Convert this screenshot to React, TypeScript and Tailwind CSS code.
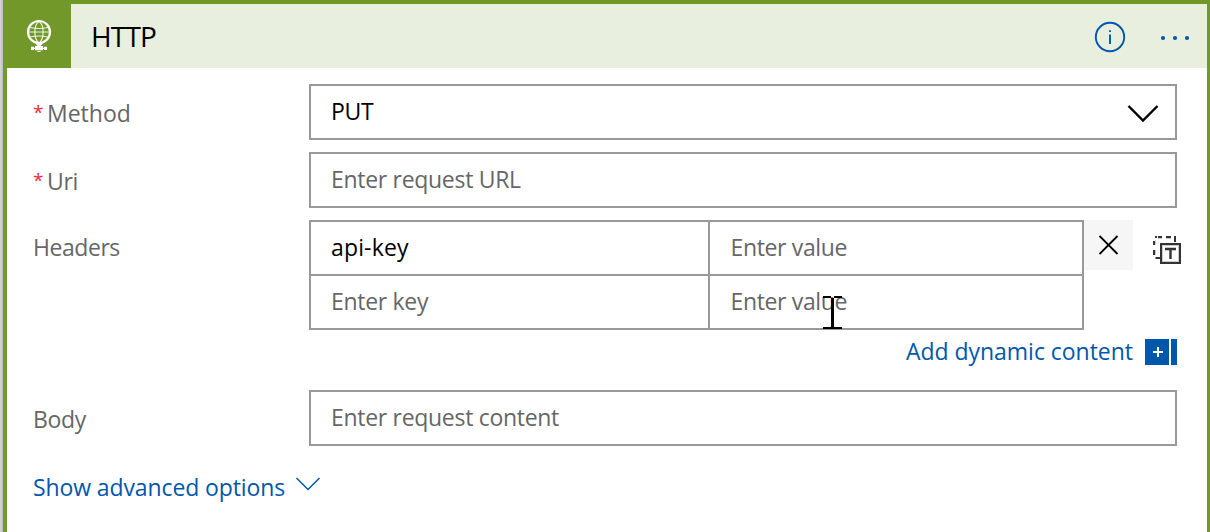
import React from "react";

const field =
  "flex h-14 items-center border-2 border-[#999] bg-white pl-5 pb-0.5";

function Label({ required, children, className = "" }: { required?: boolean; children: string; className?: string }) {
  return (
    <div className={`flex w-[276px] shrink-0 items-center whitespace-nowrap text-[#666] ${className}`}>
      {required && <span className="w-3.5 pb-0.5 text-[19px] tracking-normal text-[#f0283c]">*</span>}
      <span>{children}</span>
    </div>
  );
}

function GlobeIcon() {
  return (
    <svg width="26" height="34" viewBox="26 19 26 34" fill="none" stroke="#fff">
      <circle cx="39" cy="32" r="11" strokeWidth="2.2" />
      <g strokeWidth="1.2" strokeOpacity="0.85">
        <path d="M39 21.500C33.500 25 33.500 39 39 43M39 21.500C44.500 25 44.500 39 39 43" />
        <path d="M28 32H50M30 27.500Q39 29.500 48 27.500M30 37Q39 35 48 37" />
      </g>
      <path d="M35.500 43H42.500L40 46.500H38Z" fill="#fff" strokeWidth="0.6" />
      <path d="M31 46.800H34V50H31ZM44 46.800H47V50H44ZM35 46H43V50.200H35ZM34 47.800H44V49H34ZM37.500 51H40.500V52H37.500Z" fill="#fff" stroke="none" />
    </svg>
  );
}

function TextModeIcon() {
  return (
    <svg width="30" height="30" viewBox="1152 235 30 30" fill="none" stroke="#333">
      <path d="M1155 237H1157M1158 237H1162M1166 237H1171M1174 237H1176M1175 238V242M1154 241V245M1154 250V255M1155.500 258H1160" strokeWidth="2" />
      <path d="M1155.500 240V245M1155.500 250V255M1158 238.500H1162M1166 238.500H1171" stroke="#ccc" strokeWidth="1" />
      <rect x="1161" y="244" width="19" height="19" fill="#fff" strokeWidth="2" />
      <rect x="1162.500" y="245.500" width="16" height="16" stroke="#ccc" strokeWidth="1" />
      <path d="M1165 249H1176M1170.500 249V259" strokeWidth="2.4" />
    </svg>
  );
}

export default function App() {
  return (
    <div className="relative flex h-[532px] w-[1210px] overflow-hidden bg-white font-['Open_Sans','Noto_Sans',sans-serif] text-[23px] tracking-[-0.3px]">
      <div className="w-[3px] shrink-0 bg-linear-to-r from-[#d8d8d8] to-[#bcbcbc]" />
      <div className="flex h-full flex-1 flex-col border-t-4 border-r-[3px] border-l-4 border-[#719829]">
        <header className="flex h-16 shrink-0 items-center bg-[#e8efdf]">
          <div className="flex h-16 w-16 shrink-0 items-center justify-center bg-[#719829]">
            <GlobeIcon />
          </div>
          <h1 className="ml-5 flex-1 text-[28px] tracking-[-0.8px] text-black">HTTP</h1>
          <svg width="32" height="32" viewBox="0 0 32 32" className="mt-0.5" fill="none" stroke="#0058ad" strokeWidth="1.9">
            <circle cx="16" cy="16" r="14.2" />
            <path d="M16 13.5V23M16 9.2V11" />
          </svg>
          <svg width="32" height="6" viewBox="0 0 32 6" className="mt-1 mr-4 ml-[33px]" fill="#0058ad">
            <circle cx="4" cy="3" r="2.1" />
            <circle cx="16" cy="3" r="2.1" />
            <circle cx="28" cy="3" r="2.1" />
          </svg>
        </header>
        <main className="flex flex-col pt-4 pr-[30px] pl-[26px]">
          <div className="flex h-14">
            <Label required className="pt-0.5 tracking-[0px]">Method</Label>
            <div className={`${field} flex-1 justify-between pr-4 text-black`}>
              <span>PUT</span>
              <svg width="32" height="20" viewBox="0 0 32 20" className="mt-1.5" fill="none" stroke="#000" strokeWidth="2.4">
                <path d="M1.5 2L16 16.5L30.500 2" />
              </svg>
            </div>
          </div>
          <div className="mt-3 flex h-14">
            <Label required className="pt-0.5">Uri</Label>
            <div className={`${field} flex-1 text-[#666]`}>Enter request URL</div>
          </div>
          <div className="mt-3 flex h-[110px] items-start">
            <Label className="h-[54px] tracking-[-0.45px]">Headers</Label>
            <div className="grid h-[110px] w-[775px] shrink-0 grid-cols-[399px_372px] grid-rows-[54px_52px] border-2 border-[#999] text-[#666]">
              <div className="flex items-center border-r-2 border-b-2 border-[#999] pl-5 pb-0.5 tracking-[0.15px] text-black">api-key</div>
              <div className="flex items-center border-b-2 border-[#999] pl-[20.5px] pb-0.5 tracking-[-0.35px]">Enter value</div>
              <div className="flex items-center border-r-2 border-[#999] pl-5 pb-0.5">Enter key</div>
              <div className="flex items-center pl-[20.5px] pb-0.5 tracking-[-0.35px]">Enter value</div>
            </div>
            <div className="flex h-[50px] w-[49px] shrink-0 items-center justify-center bg-[#f6f6f6]">
              <svg width="20" height="20" viewBox="0 0 20 20" fill="none" stroke="#000" strokeWidth="1.8">
                <path d="M0.500 1L18.500 19M18.500 1L0.500 19" />
              </svg>
            </div>
            <div className="mt-[15px] ml-[19px] -mr-2 shrink-0">
              <TextModeIcon />
            </div>
          </div>
          <div className="mt-2 flex h-[27px] items-center justify-end text-[#0058ad]">
            <span className="pb-px tracking-[-0.03px]">Add dynamic content</span>
            <svg width="32" height="26" viewBox="0 0 32 26" className="ml-3">
              <path d="M0 0H24V26H0ZM26 0H32V26H26Z" fill="#0058ad" />
              <path d="M8 13H18M13 8V18" stroke="#fff" strokeWidth="2" />
            </svg>
          </div>
          <div className="mt-[25px] flex h-14">
            <Label className="pt-0.5">Body</Label>
            <div className={`${field} flex-1 text-[#666]`}>Enter request content</div>
          </div>
          <div className="mt-[23px] flex h-9 items-center text-[#0058ad]">
            <span className="tracking-[-0.11px]">Show advanced options</span>
            <svg width="26" height="16" viewBox="0 0 26 16" className="mb-1.5 ml-2.5" fill="none" stroke="#0058ad" strokeWidth="1.5">
              <path d="M1.500 2L13 13.500L24.500 2" />
            </svg>
          </div>
        </main>
      </div>
      <svg width="20" height="34" viewBox="0 0 20 34" className="absolute top-[296px] left-[823px]">
        <path d="M0 0H8V2H0ZM11 0H19V2H11ZM8 2H11V31H8ZM0 31H19V33H0Z" fill="#000" />
      </svg>
    </div>
  );
}
